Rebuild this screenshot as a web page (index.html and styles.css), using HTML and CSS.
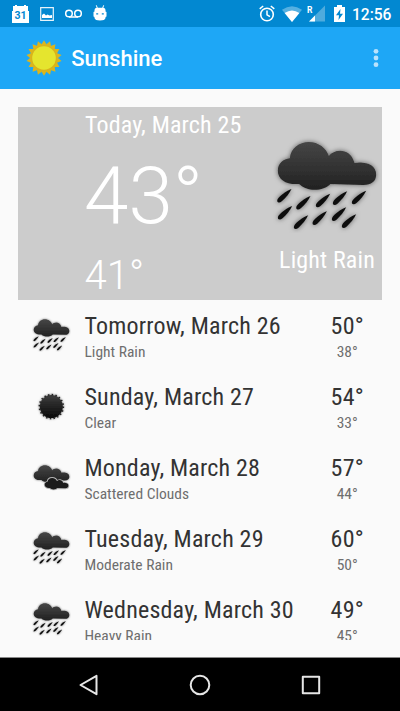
FILE: index.html
```
<!DOCTYPE html>
<html lang="en">
<head>
<meta charset="utf-8">
<title>Sunshine</title>
<link rel="stylesheet" href="styles.css">
</head>
<body>
<svg class="defs" aria-hidden="true">
  <defs>
    <linearGradient id="shade" x1="0" y1="120" x2="0" y2="390" gradientUnits="userSpaceOnUse"><stop offset="0" stop-color="#484848"/><stop offset=".5" stop-color="#252525"/><stop offset="1" stop-color="#000"/></linearGradient>
    <filter id="glow" x="-15%" y="-15%" width="130%" height="130%"><feDropShadow dx="0" dy="0" stdDeviation="8" flood-color="#000" flood-opacity=".55"/></filter>
    <path id="cloud" d="M90 176C92 146 118 127 147 127C176 127 200 146 207 169C224 147 272 144 284 190C312 185 350 192 349 226C348 245 335 256 310 256L212 253C190 276 140 276 118 253C80 256 54 240 54 213C54 192 70 178 90 176Z"/>
    <path id="drop" d="M0 0C-14 5-36 20-42 31C-46 42-36 43-29 37C-17 27-6 13 0 0Z"/>
    <symbol id="rain" viewBox="40 100 326 300">
      <g fill="url(#shade)" filter="url(#glow)"><use href="#cloud"/></g>
      <g fill="#111" filter="url(#glow)">
        <use href="#drop" x="95" y="268"/><use href="#drop" x="152" y="289"/><use href="#drop" x="211" y="282"/><use href="#drop" x="262" y="275"/><use href="#drop" x="319" y="273"/><use href="#drop" x="97" y="319"/><use href="#drop" x="145" y="347"/><use href="#drop" x="201" y="335"/><use href="#drop" x="259" y="323"/><use href="#drop" x="289" y="344"/>
      </g>
    </symbol>
    <symbol id="clear" viewBox="40 100 326 300">
      <g filter="url(#glow)"><circle cx="200" cy="262" r="95" fill="url(#shade)"/><circle cx="200" cy="262" r="99" fill="none" stroke="#222" stroke-width="14" stroke-dasharray="12 19.100"/></g>
    </symbol>
    <symbol id="clouds" viewBox="40 100 326 300">
      <g fill="url(#shade)" filter="url(#glow)"><use href="#cloud" transform="translate(0 37) scale(1 .97)"/></g>
      <g transform="translate(109 180) scale(.665)"><use href="#cloud" fill="#1b1b1b" stroke="#b4b4b4" stroke-width="22"/><use href="#cloud" fill="#1b1b1b"/></g>
    </symbol>
  </defs>
</svg>
<div class="screen">
  <header class="status">
    <svg class="calendar" width="17" height="18" viewBox="0 0 17 18"><path d="M1 1h2V0h2v1h7V0h2v1h2v5h1v12H0V6h1z" fill="#fff"/><text x="8.500" y="14" text-anchor="middle">31</text></svg>
    <svg class="picture" width="14" height="14" viewBox="0 0 14 14"><path d="M.7.7h12.600v12.600H.7z" fill="none" stroke="#e6f3fa" stroke-width="1.200"/><path d="M2 11V8l2-1.500 2 2 1.500-1 2 1L12 8v3z" fill="#fff"/></svg>
    <svg class="voicemail" width="17" height="9" viewBox="0 0 17 9"><path d="M4 8h9" stroke="#fff" stroke-width="1.500"/><circle cx="4" cy="4.500" r="3.300" fill="none" stroke="#fff" stroke-width="1.500"/><circle cx="13" cy="4.500" r="3.300" fill="none" stroke="#fff" stroke-width="1.500"/></svg>
    <svg class="droid" width="14" height="16" viewBox="0 0 14 16"><path d="M3.300.3L4.300 3M10.700.3L9.700 3" stroke="#fff"/><path d="M3.500 2.800h7Q12.500 3 12.500 5v1.500l1 .5v4.500l-1 .5v1Q12 15.500 7 15.500T1.500 13v-1l-1-.5V7l1-.5V5q0-2 2-2.200z" fill="#fff"/><path d="M3.200 8.800h2M8.800 8.800h2" stroke="#0288d1" stroke-width="1.300"/></svg>
    <svg class="alarm" width="16" height="17" viewBox="0 0 16 17"><circle cx="8" cy="9.500" r="6.300" fill="none" stroke="#fff" stroke-width="1.600"/><path d="M8 5.500v4.300l3 1.900M.7 3.900L4.200 1M15.300 3.900L11.800 1" fill="none" stroke="#fff" stroke-width="1.500"/></svg>
    <svg class="wifi" width="20" height="16" viewBox="0 0 20 16"><path d="M0 3.800Q10-3.500 20 3.800L10 16z" fill="#55b0e1"/><path d="M2.600 7Q10 1.800 17.400 7L10 16z" fill="#fff"/></svg>
    <svg class="signal" width="18" height="17" viewBox="0 0 18 17"><path d="M18 .5V16.500H2z" fill="#4eabdd"/><path d="M8 10.500v6H2z" fill="#fff"/><text x="0" y="7.500">R</text></svg>
    <svg class="battery" width="11" height="17" viewBox="0 0 11 17"><path d="M0 2h3V0h5v2h3v15H0z" fill="#fff"/><path d="M6.500 4L2 10.200h3L4.500 15 9 8.700H6z" fill="#0288d1"/></svg>
    <span class="clock">12:56</span>
  </header>
  <div class="appbar">
    <svg width="36" height="36" viewBox="-18 -18 36 36"><g id="rays" fill="#dcb51c"><path id="ray" d="M-3.500-12L0-17.800L3.500-12z"/><use href="#ray" transform="rotate(40)"/><use href="#ray" transform="rotate(80)"/><use href="#ray" transform="rotate(120)"/><use href="#ray" transform="rotate(160)"/><use href="#ray" transform="rotate(200)"/><use href="#ray" transform="rotate(240)"/><use href="#ray" transform="rotate(280)"/><use href="#ray" transform="rotate(320)"/></g><use href="#rays" transform="rotate(20)"/><circle r="13" fill="#d9b31c"/><circle r="11.800" fill="#e5e52e"/></svg>
    <h1>Sunshine</h1>
    <svg class="more" width="6" height="20" viewBox="0 0 6 20" fill="#b9e2fc"><circle cx="3" cy="3.300" r="2.400"/><circle cx="3" cy="10" r="2.400"/><circle cx="3" cy="16.700" r="2.400"/></svg>
  </div>
  <main>
    <section class="today">
      <div class="now"><div class="day">Today, March 25</div><div class="high">43°</div><div class="low">41°</div></div>
      <div class="sky"><svg width="109" height="100"><use href="#rain"/></svg><div>Light Rain</div></div>
    </section>
    <ul>
      <li><svg><use href="#rain"/></svg><div class="info"><b>Tomorrow, March 26</b><small>Light Rain</small></div><div class="temp"><b>50°</b><small>38°</small></div></li>
      <li><svg><use href="#clear"/></svg><div class="info"><b>Sunday, March 27</b><small>Clear</small></div><div class="temp"><b>54°</b><small>33°</small></div></li>
      <li><svg><use href="#clouds"/></svg><div class="info"><b>Monday, March 28</b><small>Scattered Clouds</small></div><div class="temp"><b>57°</b><small>44°</small></div></li>
      <li><svg><use href="#rain"/></svg><div class="info"><b>Tuesday, March 29</b><small>Moderate Rain</small></div><div class="temp"><b>60°</b><small>50°</small></div></li>
      <li><svg><use href="#rain"/></svg><div class="info"><b>Wednesday, March 30</b><small>Heavy Rain</small></div><div class="temp"><b>49°</b><small>45°</small></div></li>
    </ul>
  </main>
  <nav>
    <svg width="22" height="22" viewBox="0 0 22 22"><path d="M2.500 11L18.500 1.800v18.400z"/></svg>
    <svg width="22" height="22" viewBox="0 0 22 22"><circle cx="11" cy="11" r="9.300"/></svg>
    <svg width="22" height="22" viewBox="0 0 22 22"><rect x="2.800" y="2.800" width="16.400" height="16.400"/></svg>
  </nav>
</div>
</body>
</html>
```
FILE: styles.css
```
* { box-sizing: border-box; }
body { margin: 0; font-family: Roboto, sans-serif; background: #fafafa; }
.defs { position: absolute; width: 0; height: 0; }
svg { display: block; flex: none; }
.screen { width: 400px; height: 711px; display: flex; flex-direction: column; overflow: hidden; }
.status { height: 27px; background: #0288d1; display: flex; align-items: center; padding: 0 8.500px 0 11.500px; color: #fff; }
.status text { font-family: Roboto, sans-serif; font-weight: 700; }
.calendar text { font-size: 10.500px; fill: #0288d1; }
.signal text { font-size: 8.500px; fill: #fff; }
.picture { margin-left: 11px; }
.voicemail { margin-left: 11.500px; }
.droid { margin: 0 auto 2px 11px; }
.wifi { margin-left: 7.500px; }
.signal { margin-left: 4.500px; }
.battery { margin-left: 9px; }
.clock { margin: 2px 0 0 7px; font-size: 15.600px; font-weight: 500; line-height: 20px; }
.appbar { height: 62px; background: #1ea7f6; display: flex; align-items: center; padding: 0 21.500px 0 26.300px; color: #fff; }
.appbar h1 { margin: 2px auto 0 9px; font-size: 22px; font-weight: 500; line-height: 30px; }
main { height: 533px; margin-top: 18px; padding: 0 18px; overflow: hidden; flex: none; font-family: "Roboto Condensed", Roboto, sans-serif; font-stretch: 75%; }
.today { height: 193px; background: #ccc; color: #fff; display: flex; padding-left: 67px; }
.now { width: 188px; display: flex; flex-direction: column; }
.day { font-size: 24px; line-height: 28px; margin-top: 4px; white-space: nowrap; letter-spacing: .15px; }
.high, .low { font-family: Roboto, sans-serif; font-stretch: 100%; font-weight: 300; }
.high { font-size: 80px; line-height: 94px; margin: 10px 0 0 -1px; }
.low { font-size: 40px; line-height: 47px; margin: 9px 0 0 -.5px; }
.sky { width: 109px; padding-top: 26px; display: flex; flex-direction: column; font-size: 24px; line-height: 28px; letter-spacing: .15px; }
.sky div { margin: 13px 0 0 -1px; text-align: center; white-space: nowrap; }
ul { margin: 0; padding: 0; list-style: none; }
li { height: 71px; display: flex; padding-left: 13.600px; color: #333; }
li svg { width: 39.400px; height: 36.300px; margin-top: 15.700px; }
.info { margin-left: 13.500px; width: 223px; flex: none; }
.temp { width: 74.500px; margin-left: 2.500px; margin-right: -3px; flex: none; text-align: center; }
b, small { display: block; white-space: nowrap; }
b { font-size: 24px; font-weight: 400; line-height: 28px; margin-top: 12px; letter-spacing: .19px; }
small { font-size: 15.500px; line-height: 18px; margin-top: 3px; color: #6e6e6e; }
nav { margin-top: auto; height: 54px; background: #000; border-top: 1px solid #888; display: flex; align-items: center; justify-content: center; gap: 89px; }
nav svg { fill: none; stroke: #e6e6e6; stroke-width: 2; stroke-linejoin: round; }
```
